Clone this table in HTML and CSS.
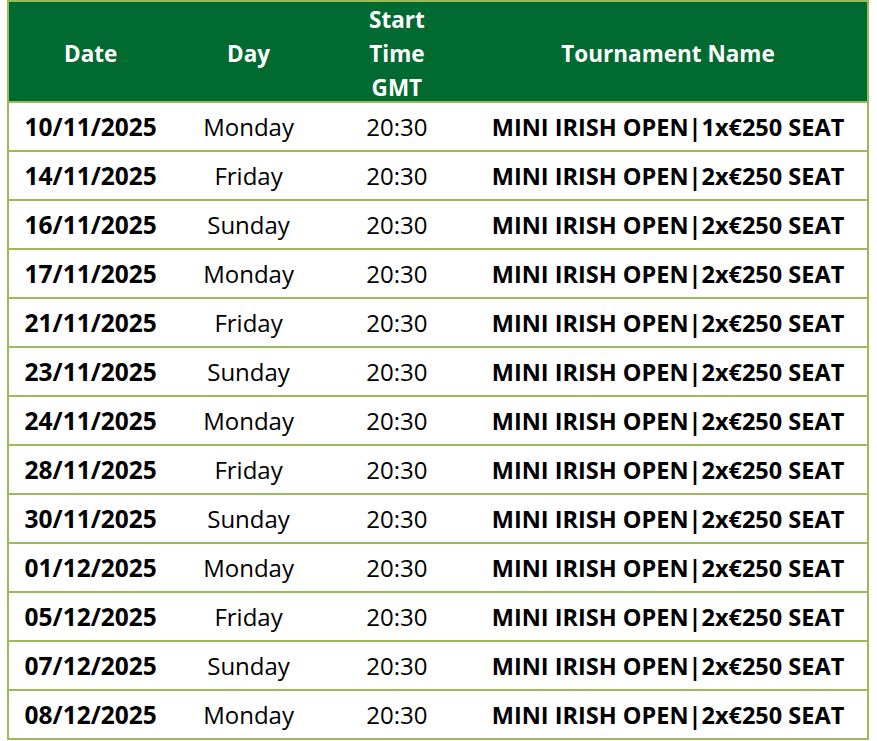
FILE: index.html
```html
<!DOCTYPE html>
<html>
<head>
<meta charset="utf-8">
<link rel="stylesheet" href="styles.css">
</head>
<body>
<table class="schedule">
  <colgroup>
    <col class="c-date"><col class="c-day"><col class="c-time"><col class="c-name">
  </colgroup>
  <thead>
    <tr>
      <th><div class="h one">Date</div></th>
      <th><div class="h one">Day</div></th>
      <th><div class="h">Start<br>Time<br>GMT</div></th>
      <th><div class="h one">Tournament Name</div></th>
    </tr>
  </thead>
  <tbody>
    <tr><td class="date">10/11/2025</td><td>Monday</td><td>20:30</td><td class="name">MINI IRISH OPEN|1x€250 SEAT</td></tr>
    <tr><td class="date">14/11/2025</td><td>Friday</td><td>20:30</td><td class="name">MINI IRISH OPEN|2x€250 SEAT</td></tr>
    <tr><td class="date">16/11/2025</td><td>Sunday</td><td>20:30</td><td class="name">MINI IRISH OPEN|2x€250 SEAT</td></tr>
    <tr><td class="date">17/11/2025</td><td>Monday</td><td>20:30</td><td class="name">MINI IRISH OPEN|2x€250 SEAT</td></tr>
    <tr><td class="date">21/11/2025</td><td>Friday</td><td>20:30</td><td class="name">MINI IRISH OPEN|2x€250 SEAT</td></tr>
    <tr><td class="date">23/11/2025</td><td>Sunday</td><td>20:30</td><td class="name">MINI IRISH OPEN|2x€250 SEAT</td></tr>
    <tr><td class="date">24/11/2025</td><td>Monday</td><td>20:30</td><td class="name">MINI IRISH OPEN|2x€250 SEAT</td></tr>
    <tr><td class="date">28/11/2025</td><td>Friday</td><td>20:30</td><td class="name">MINI IRISH OPEN|2x€250 SEAT</td></tr>
    <tr><td class="date">30/11/2025</td><td>Sunday</td><td>20:30</td><td class="name">MINI IRISH OPEN|2x€250 SEAT</td></tr>
    <tr><td class="date">01/12/2025</td><td>Monday</td><td>20:30</td><td class="name">MINI IRISH OPEN|2x€250 SEAT</td></tr>
    <tr><td class="date">05/12/2025</td><td>Friday</td><td>20:30</td><td class="name">MINI IRISH OPEN|2x€250 SEAT</td></tr>
    <tr><td class="date">07/12/2025</td><td>Sunday</td><td>20:30</td><td class="name">MINI IRISH OPEN|2x€250 SEAT</td></tr>
    <tr><td class="date">08/12/2025</td><td>Monday</td><td>20:30</td><td class="name">MINI IRISH OPEN|2x€250 SEAT</td></tr>
  </tbody>
</table>
</body>
</html>
```

FILE: styles.css
```css
html, body {
  margin: 0;
  padding: 0;
  background: #ffffff;
}
body {
  padding-left: 7px;
  font-family: "Open Sans", "Noto Sans", sans-serif;
  color: #000000;
}
.schedule {
  border-collapse: collapse;
  table-layout: fixed;
  width: 862px;
  border: 2px solid #9bbb59;
}
.c-date { width: 164px; }
.c-day { width: 152px; }
.c-time { width: 144px; }
.c-name { width: 398px; }
.schedule th {
  background: #006a31;
  color: #ffffff;
  font-weight: 700;
  font-size: 22.5px;
  height: 99px;
  padding: 0;
  text-align: center;
  vertical-align: top;
  border-bottom: 2px solid #9bbb59;
}
.h {
  box-sizing: border-box;
  height: 99px;
  padding-top: 1px;
  line-height: 34px;
  white-space: nowrap;
}
.h.one {
  padding-top: 35px;
}
.schedule td {
  height: 47px;
  padding: 0;
  text-align: center;
  vertical-align: middle;
  font-size: 24px;
  line-height: 30px;
  border-bottom: 2px solid #9bbb59;
  white-space: nowrap;
}
.schedule td.date {
  font-weight: 700;
  font-size: 24.5px;
}
.schedule td.name {
  font-weight: 700;
  font-size: 23.5px;
}
```
